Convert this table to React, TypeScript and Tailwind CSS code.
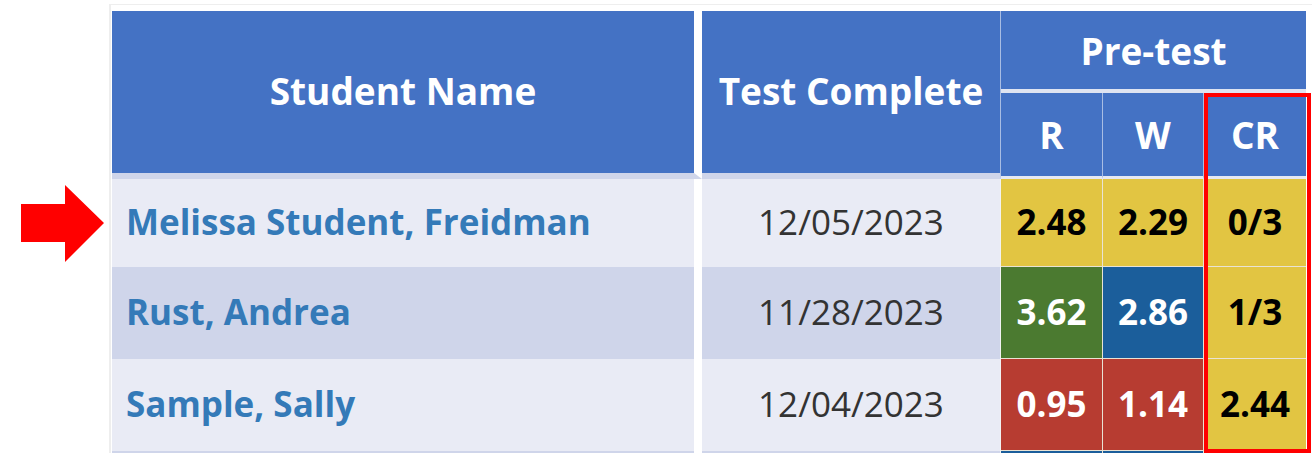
import React from 'react';

type Score = { value: string; tone: 'yellow' | 'green' | 'blue' | 'red' };

interface StudentRow {
  name: string;
  completed: string;
  r: Score;
  w: Score;
  cr: Score;
}

const students: StudentRow[] = [
  {
    name: 'Melissa Student, Freidman',
    completed: '12/05/2023',
    r: { value: '2.48', tone: 'yellow' },
    w: { value: '2.29', tone: 'yellow' },
    cr: { value: '0/3', tone: 'yellow' },
  },
  {
    name: 'Rust, Andrea',
    completed: '11/28/2023',
    r: { value: '3.62', tone: 'green' },
    w: { value: '2.86', tone: 'blue' },
    cr: { value: '1/3', tone: 'yellow' },
  },
  {
    name: 'Sample, Sally',
    completed: '12/04/2023',
    r: { value: '0.95', tone: 'red' },
    w: { value: '1.14', tone: 'red' },
    cr: { value: '2.44', tone: 'yellow' },
  },
  {
    name: '',
    completed: '',
    r: { value: '', tone: 'blue' },
    w: { value: '', tone: 'blue' },
    cr: { value: '', tone: 'yellow' },
  },
];

const toneClass: Record<Score['tone'], string> = {
  yellow: 'bg-[#e2c542] text-black',
  green: 'bg-[#4b7a30] text-white',
  blue: 'bg-[#1b5e9b] text-white',
  red: 'bg-[#b73c31] text-white',
};

const rowHeights = ['h-[88px]', 'h-[92px]', 'h-[92px]', 'h-[92px]'];

const ScoreCell = ({ score, last }: { score: Score; last?: boolean }) => (
  <td
    className={
      'text-center font-bold pb-[3px] border-b border-[#e9e3d4] ' +
      (last ? '' : 'border-r ') +
      toneClass[score.tone]
    }
  >
    {score.value}
  </td>
);

export default function App() {
  return (
    <div
      className="relative w-[1312px] h-[453px] overflow-hidden bg-white"
      style={{ fontFamily: '"Open Sans", "Liberation Sans", sans-serif' }}
    >
      {/* Annotation arrow */}
      <svg
        className="absolute left-0 top-0"
        width="120"
        height="300"
        viewBox="0 0 120 300"
      >
        <polygon
          points="21,204 65,204 65,185 104,223 65,262 65,242 21,242"
          fill="#ff0000"
        />
      </svg>

      <div className="ml-[109px] mt-[4px] border-l-2 border-t border-[#eeeeee] pl-px pt-[6px]">
        <table className="table-fixed border-separate border-spacing-0 w-[1194px] text-[35px] leading-none">
          <colgroup>
            <col className="w-[590px]" />
            <col className="w-[299px]" />
            <col className="w-[102px]" />
            <col className="w-[101px]" />
            <col className="w-[102px]" />
          </colgroup>
          <thead className="text-[37px]">
            <tr className="h-[82px]">
              <th
                rowSpan={2}
                className="bg-[#4472c4] text-white font-bold pb-[3px] border-r-8 border-r-white border-b-[6px] border-b-[#cfd5ea]"
              >
                Student Name
              </th>
              <th
                rowSpan={2}
                className="bg-[#4472c4] text-white font-bold pb-[3px] border-r border-r-[#a9bde3] border-b-[6px] border-b-[#cfd5ea]"
              >
                Test Complete
              </th>
              <th
                colSpan={3}
                className="bg-[#4472c4] text-white font-bold border-b-4 border-b-[#dfe4f1]"
              >
                Pre-test
              </th>
            </tr>
            <tr className="h-[86px]">
              <th className="bg-[#4472c4] text-white font-bold border-r border-r-[#a9bde3] border-b-[3px] border-b-[#e6e9f3]">
                R
              </th>
              <th className="bg-[#4472c4] text-white font-bold border-r border-r-[#a9bde3] border-b-[3px] border-b-[#e6e9f3]">
                W
              </th>
              <th className="bg-[#4472c4] text-white font-bold border-b-[3px] border-b-[#e6e9f3]">
                CR
              </th>
            </tr>
          </thead>
          <tbody>
            {students.map((s, i) => {
              const bg = i % 2 === 0 ? 'bg-[#e9ebf5]' : 'bg-[#cfd5ea]';
              return (
                <tr key={i} className={rowHeights[i]}>
                  <td className={bg + ' border-r-8 border-r-white pl-[14px] pb-[3px] font-bold text-[#347ab8]'}>
                    {s.name}
                  </td>
                  <td className={bg + ' border-r border-r-[#f2f2f2] pb-[3px] text-center text-[#333333]'}>
                    {s.completed}
                  </td>
                  <ScoreCell score={s.r} />
                  <ScoreCell score={s.w} />
                  <ScoreCell score={s.cr} last />
                </tr>
              );
            })}
          </tbody>
        </table>
      </div>

      {/* Highlight box around CR column */}
      <div className="absolute left-[1204px] top-[93px] w-[107px] h-[360px] border-4 border-[#ff0000]" />
    </div>
  );
}
